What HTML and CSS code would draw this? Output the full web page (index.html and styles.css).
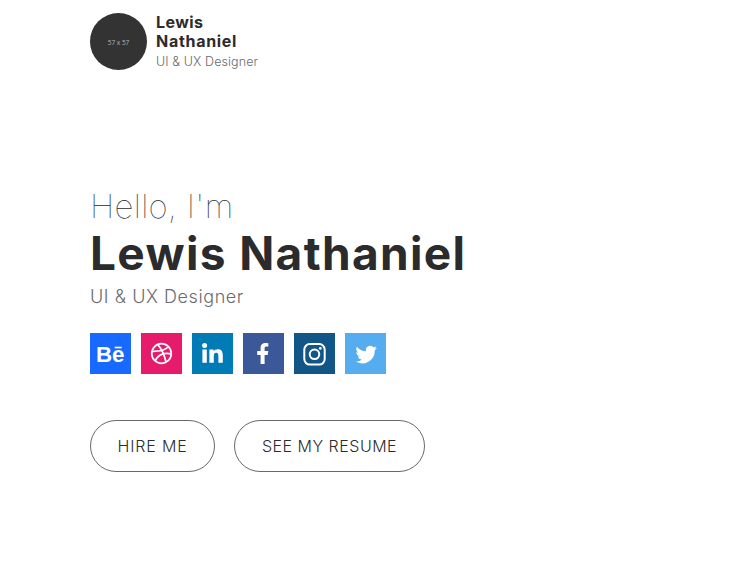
FILE: index.html
```html
<!DOCTYPE html>
<html lang="en">
<head>
<meta charset="utf-8">
<title>Lewis Nathaniel</title>
<link rel="stylesheet" href="styles.css">
</head>
<body>
<header class="brand">
  <div class="avatar">57 x 57</div>
  <div>
    <div class="brand-name"><span class="brand-first">Lewis</span><br>Nathaniel</div>
    <div class="brand-role">UI &amp; UX Designer</div>
  </div>
</header>
<main class="intro">
  <p class="hello">Hello, I'm</p>
  <h1 class="name">Lewis Nathaniel</h1>
  <p class="role">UI &amp; UX Designer</p>
  <nav class="social">
    <a class="tile behance"><svg viewBox="0 0 41 41"><text class="be" x="6" y="29" textLength="28.5" lengthAdjust="spacingAndGlyphs">Be</text><rect x="24.7" y="13.7" width="7" height="1.6"/></svg></a>
    <a class="tile dribbble"><svg viewBox="0 0 41 41"><g class="line thin"><circle cx="20.5" cy="20.5" r="9.8"/><path d="M16.8 11.5C20.5 16 23.5 22 25 29M11 18.4c7 .2 13-1 16.7-4.9M14 27.8c3.3-6.4 9-8.6 16.2-6.9"/></g></svg></a>
    <a class="tile linkedin"><svg viewBox="0 0 41 41"><circle cx="12.6" cy="12.6" r="2.5"/><path d="M10.4 16.5h4.4v13.2h-4.4zM17.4 16.5h4.2v1.8c.8-1.3 2.2-2.1 4.1-2.1 4.1 0 5.1 2.6 5.1 6.2v7.3h-4.4v-6.5c0-1.9-.3-3.5-2.2-3.5-1.9 0-2.4 1.5-2.4 3.4v6.6h-4.4z"/></svg></a>
    <a class="tile facebook"><svg viewBox="0 0 41 41"><path d="M17.6 31V22h-3.4v-4h3.4v-2.9c0-3.5 2-5.1 5-5.1 1.3 0 2.2.1 2.7.2v3.4h-1.8c-1.6 0-1.9.8-1.9 2V18h3.7l-.6 4h-3.1v9z"/></svg></a>
    <a class="tile instagram"><svg viewBox="0 0 41 41"><g class="line"><rect x="10.3" y="11.1" width="20.4" height="20.4" rx="5.4"/><circle cx="20.5" cy="21.3" r="4.8"/></g><circle cx="26.3" cy="15.4" r="1.4"/></svg></a>
    <a class="tile twitter"><svg viewBox="0 0 41 41"><path transform="translate(10.4 10.8) scale(.9)" d="M24 4.6a10 10 0 0 1-2.8.8 5 5 0 0 0 2.1-2.7 10 10 0 0 1-3.1 1.2 4.9 4.9 0 0 0-8.4 4.5A14 14 0 0 1 1.7 3.2a4.9 4.9 0 0 0 1.5 6.5 5 5 0 0 1-2.2-.6v.1a4.9 4.9 0 0 0 3.9 4.8 5 5 0 0 1-2.2.1 4.9 4.9 0 0 0 4.6 3.4A9.9 9.9 0 0 1 0 19.5a14 14 0 0 0 21.5-12.4A10 10 0 0 0 24 4.6z"/></svg></a>
  </nav>
  <div class="actions">
    <a class="button hire">HIRE ME</a>
    <a class="button resume">SEE MY RESUME</a>
  </div>
</main>
</body>
</html>
```
FILE: styles.css
```css
* { box-sizing: border-box; }
body {
  margin: 0;
  padding: 13px 90px 0;
  background: #fff;
  color: #2b2b2d;
  font-family: Inter, "Open Sans", sans-serif;
}
.brand { display: flex; gap: 9px; height: 57px; }
.avatar {
  width: 57px;
  height: 57px;
  border-radius: 50%;
  background: #333;
  color: #b4b4b4;
  font: 400 6.5px/59px "Open Sans", sans-serif;
  text-align: center;
}
.brand-name { font-size: 16px; line-height: 19px; font-weight: 700; letter-spacing: .7px; }
.brand-first { letter-spacing: .4px; }
.brand-role { margin-top: 2px; font-size: 12.5px; line-height: 18px; font-weight: 300; color: #6b6b6e; letter-spacing: .1px; }
.intro { padding-top: 116px; }
.hello { margin: 0 0 1px; font-size: 33px; line-height: 41px; font-weight: 100; letter-spacing: .3px; }
.name { margin: 0; font-size: 46px; line-height: 50px; font-weight: 700; letter-spacing: 1.36px; white-space: nowrap; }
.role { margin: 6px 0 0; font-size: 18px; line-height: 26px; font-weight: 300; color: #6b6b6e; letter-spacing: .57px; }
.social { display: flex; gap: 10px; margin-top: 23px; }
.tile { width: 41px; height: 41px; }
.tile svg { display: block; width: 41px; height: 41px; fill: #fff; }
.behance { background: #1769ff; }
.dribbble { background: #e61b6b; }
.linkedin { background: #007bb6; }
.facebook { background: #3b5998; }
.instagram { background: #125688; }
.twitter { background: #55acee; }
.be { font: 700 22px "Liberation Sans", sans-serif; }
.line { fill: none; stroke: #fff; stroke-width: 2; }
.thin { stroke-width: 1.7; }
.actions { display: flex; gap: 19px; margin-top: 46px; }
.button {
  height: 52px;
  border: 1px solid #69696b;
  border-radius: 26px;
  font-size: 16px;
  line-height: 51px;
  font-weight: 300;
  text-align: center;
  white-space: nowrap;
}
.hire { width: 125px; letter-spacing: .85px; }
.resume { width: 191px; letter-spacing: .5px; }
```
